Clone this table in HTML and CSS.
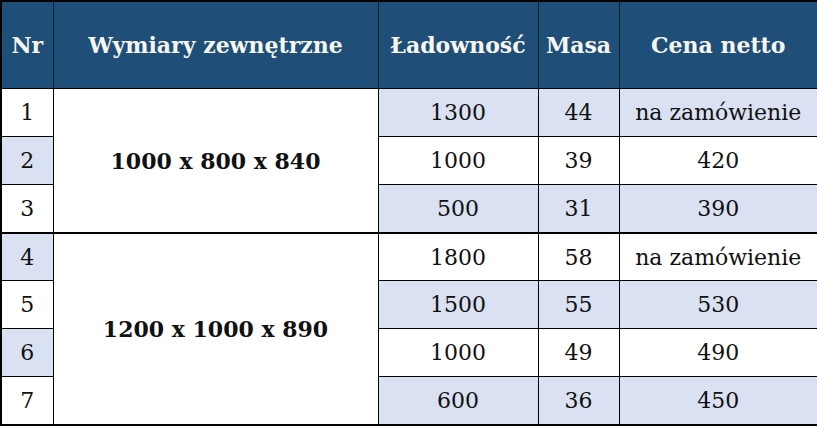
FILE: index.html
```html
<!DOCTYPE html>
<html lang="pl">
<head>
<meta charset="utf-8">
<title>Tabela</title>
<link rel="stylesheet" href="styles.css">
</head>
<body>
<table class="spec">
  <colgroup>
    <col class="c-nr">
    <col class="c-dim">
    <col class="c-load">
    <col class="c-mass">
    <col class="c-price">
  </colgroup>
  <thead>
    <tr>
      <th class="h-nr">Nr</th>
      <th>Wymiary zewnętrzne</th>
      <th>Ładowność</th>
      <th>Masa</th>
      <th>Cena netto</th>
    </tr>
  </thead>
  <tbody>
    <tr>
      <td class="nr">1</td>
      <td class="dim" rowspan="3">1000 x 800 x 840</td>
      <td class="band">1300</td>
      <td class="band">44</td>
      <td class="band">na zamówienie</td>
    </tr>
    <tr>
      <td class="nr band">2</td>
      <td>1000</td>
      <td>39</td>
      <td>420</td>
    </tr>
    <tr>
      <td class="nr">3</td>
      <td class="band">500</td>
      <td class="band">31</td>
      <td class="band">390</td>
    </tr>
    <tr class="group">
      <td class="nr band">4</td>
      <td class="dim" rowspan="4">1200 x 1000 x 890</td>
      <td>1800</td>
      <td>58</td>
      <td>na zamówienie</td>
    </tr>
    <tr>
      <td class="nr">5</td>
      <td class="band">1500</td>
      <td class="band">55</td>
      <td class="band">530</td>
    </tr>
    <tr>
      <td class="nr band">6</td>
      <td>1000</td>
      <td>49</td>
      <td>490</td>
    </tr>
    <tr>
      <td class="nr">7</td>
      <td class="band">600</td>
      <td class="band">36</td>
      <td class="band">450</td>
    </tr>
  </tbody>
</table>
</body>
</html>
```

FILE: styles.css
```css
html, body {
  margin: 0;
  padding: 0;
  background: #ffffff;
}

.spec {
  width: 817px;
  border-collapse: collapse;
  table-layout: fixed;
  font-family: "DejaVu Serif", "Liberation Serif", serif;
  font-size: 22px;
  color: #111111;
  border: 2px solid #000000;
}

.c-nr { width: 52px; }
.c-dim { width: 325px; }
.c-load { width: 160px; }
.c-mass { width: 81px; }
.c-price { width: 199px; }

.spec th {
  height: 86px;
  padding: 0;
  background: #1f4e79;
  color: #f7f7f2;
  font-weight: bold;
  text-align: center;
  vertical-align: middle;
  border-left: 1px solid #0b1f33;
  border-right: 1px solid #0b1f33;
  border-top: 2px solid #000000;
}

.spec th.h-nr {
  border-bottom: 1px solid #000000;
  border-left: 2px solid #000000;
}

.spec td {
  height: 47px;
  padding: 0;
  text-align: center;
  vertical-align: middle;
  border: 1px solid #000000;
  background: #ffffff;
  white-space: nowrap;
}

.spec td.band {
  background: #d9e1f2;
}

.spec td.dim {
  font-weight: bold;
  background: #ffffff;
}

.spec tr.group td {
  height: 46px;
  border-top: 2px solid #000000;
}
```
